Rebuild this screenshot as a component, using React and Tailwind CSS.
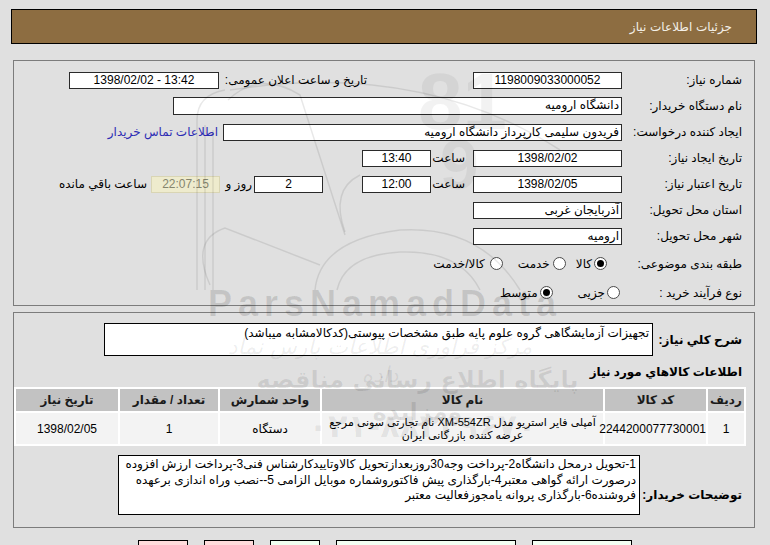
const font = "font-['Liberation_Sans','DejaVu_Sans',sans-serif]";

function Box({ className = "", children, ltr }) {
  return (
    <div
      dir={ltr ? "ltr" : undefined}
      className={`h-[17px] border border-[#2a2a2a] bg-white text-[12px] leading-[15px] whitespace-nowrap overflow-hidden ${className}`}
    >
      {children}
    </div>
  );
}

function Radio({ checked }) {
  return (
    <span className="w-[13px] h-[13px] rounded-full border border-[#4a4a4a] bg-white flex items-center justify-center shrink-0">
      {checked && <span className="w-[7px] h-[7px] rounded-full bg-black" />}
    </span>
  );
}

function Label({ w, children, className = "" }) {
  return <div className={`shrink-0 text-[12px] text-black whitespace-nowrap ${w} ${className}`}>{children}</div>;
}

function Watermark() {
  return (
    <div className="absolute inset-0 pointer-events-none overflow-hidden">
      <svg className="absolute left-0 top-0" width="770" height="545" fill="none" stroke="rgba(0,0,0,0.09)" strokeWidth="1.5">
        <path d="M197 290 V120 Q197 95 225 90" />
        <path d="M205 290 V125" />
        <path d="M213 290 V130" />
        <path d="M230 90 Q420 60 560 150" />
        <path d="M228 100 Q260 70 300 95 L345 235" />
        <path d="M210 285 Q190 240 225 228 L320 265" />
        <path d="M315 290 Q320 240 400 230 Q480 225 520 290" />
        <path d="M337 290 Q345 255 400 252 Q460 250 480 290" />
        <path d="M345 232 Q330 190 360 175" />
      </svg>
      <div className="absolute left-[418px] top-[62px] text-[80px] leading-[80px] font-bold text-black/[0.05] font-['Liberation_Sans',sans-serif]">
        81
      </div>
      <div className="absolute left-[440px] top-[130px] text-[70px] leading-[70px] font-bold text-black/[0.05] font-['Liberation_Sans',sans-serif]">
        9
      </div>
      <div className="absolute left-[208px] top-[284px] text-[36px] leading-[40px] font-bold tracking-[6px] text-black/[0.12] font-['Liberation_Sans',sans-serif]">
        ParsNamadData
      </div>
      <div dir="rtl" className="absolute left-[215px] top-[333px] w-[330px] text-center text-[22px] leading-[28px] italic text-black/[0.07] font-['DejaVu_Sans',sans-serif]">
        مرکز فراوری اطلاعات پارس نماد داده
      </div>
      <div dir="rtl" className="absolute left-[225px] top-[364px] w-[385px] text-center text-[24px] leading-[32px] font-bold text-black/[0.09] font-['DejaVu_Sans',sans-serif]">
        پایگاه اطلاع رسانی مناقصه ومزایده
      </div>
      <div dir="ltr" className="absolute left-[280px] top-[408px] w-[285px] text-center text-[32px] leading-[36px] font-bold text-black/[0.08] font-['DejaVu_Sans',sans-serif]">
        ۰۲۱-۸۸۳۴۹۶۷۰
      </div>
    </div>
  );
}

export default function App() {
  return (
    <div className={`relative w-[770px] h-[545px] overflow-hidden bg-[#e0e0e0] ${font}`}>
      <div className="ml-[11px] mt-[9px] w-[746px] h-[35px] bg-[#8d6d41] border border-black flex items-center justify-end pr-[24px]">
        <span className="text-[12px] text-[#f4f0e8] font-['DejaVu_Sans',sans-serif]">جزئیات اطلاعات نیاز</span>
      </div>

      {/* panel 1 */}
      <div dir="rtl" className="ml-[13px] mt-[16px] w-[742px] h-[246px] border border-[#7c7c7c] pr-[12px] pt-[6px]">
        <div className="flex items-center h-[26px]">
          <Label w="w-[120px]">شماره نیاز:</Label>
          <Box ltr className="w-[149px] text-center">1198009033000052</Box>
          <Label w="w-[148px] mr-[106px]">تاریخ و ساعت اعلان عمومی:</Label>
          <Box ltr className="w-[150px] text-center">1398/02/02 - 13:42</Box>
        </div>
        <div className="flex items-center h-[26px]">
          <Label w="w-[120px]">نام دستگاه خریدار:</Label>
          <Box className="w-[449px] h-[18px] pr-[2px]">دانشگاه ارومیه</Box>
        </div>
        <div className="flex items-center h-[26px]">
          <Label w="w-[120px]">ایجاد کننده درخواست:</Label>
          <Box className="w-[399px] pr-[2px]">فریدون سلیمی کارپرداز دانشگاه ارومیه</Box>
          <span className="mr-[5px] text-[12px] text-[#2c2cb4] whitespace-nowrap">اطلاعات تماس خریدار</span>
        </div>
        <div className="flex items-center h-[26px]">
          <Label w="w-[120px]">تاریخ ایجاد نیاز:</Label>
          <Box ltr className="w-[149px] text-center">1398/02/02</Box>
          <Label w="w-[42px]" className="pr-[8px]">ساعت</Label>
          <Box ltr className="w-[69px] text-center">13:40</Box>
        </div>
        <div className="flex items-center h-[26px]">
          <Label w="w-[120px]">تاریخ اعتبار نیاز:</Label>
          <Box ltr className="w-[149px] text-center">1398/02/05</Box>
          <Label w="w-[42px]" className="pr-[8px]">ساعت</Label>
          <Box ltr className="w-[69px] text-center">12:00</Box>
          <Box ltr className="w-[69px] mr-[39px] text-center">2</Box>
          <Label w="w-[34px]" className="pr-[2px]">روز و</Label>
          <div dir="ltr" className="w-[69px] h-[17px] bg-[#eeebcd] border border-[#d9d5b4] text-center text-[12px] leading-[15px] text-[#85856e]">
            22:07:15
          </div>
          <Label w="" className="mr-[4px]">ساعت باقي مانده</Label>
        </div>
        <div className="flex items-center h-[26px]">
          <Label w="w-[120px]">استان محل تحویل:</Label>
          <Box className="w-[149px] pr-[2px]">آذربایجان غربی</Box>
        </div>
        <div className="flex items-center h-[26px]">
          <Label w="w-[120px]">شهر محل تحویل:</Label>
          <Box className="w-[149px] pr-[2px]">ارومیه</Box>
        </div>
        <div className="flex items-center h-[29px]">
          <Label w="w-[120px]">طبقه بندی موضوعی:</Label>
          <div className="flex items-center mr-[15px] text-[12px]">
            <Radio checked />
            <span className="mr-[2px]">كالا</span>
            <span className="mr-[10px]"><Radio /></span>
            <span className="mr-[3px]">خدمت</span>
            <span className="mr-[15px]"><Radio /></span>
            <span className="mr-[5px]">كالا/خدمت</span>
          </div>
        </div>
        <div className="flex items-center h-[29px]">
          <Label w="w-[120px]">نوع فرآیند خرید :</Label>
          <div className="flex items-center mr-[2px] text-[12px]">
            <Radio />
            <span className="mr-[2px]">جزیی</span>
            <span className="mr-[25px]"><Radio checked /></span>
            <span className="mr-[2px]">متوسط</span>
          </div>
        </div>
      </div>

      {/* panel 2 */}
      <div dir="rtl" className="ml-[13px] mt-[6px] w-[742px] h-[216px] border border-[#7c7c7c] pr-[12px] pt-[10px]">
        <div className="flex items-center">
          <div className="w-[89px] shrink-0 text-[12px] font-bold whitespace-nowrap">شرح كلي نياز:</div>
          <div className="w-[549px] h-[33px] border border-black bg-white text-[12px] leading-[16px] pr-[3px] pt-[1px] whitespace-nowrap overflow-hidden">
            تجهیزات آزمایشگاهی گروه علوم پایه طبق مشخصات پیوستی(کدکالامشابه میباشد)
          </div>
        </div>
        <div className="mt-[6px] h-[20px] flex items-center text-[12px] font-bold">اطلاعات كالاهاي مورد نياز</div>
        <div className="mt-[5px] -mr-[4px] w-[718px]">
          <table className="w-full table-fixed border-separate border-spacing-[2px] bg-white text-[12px] text-center">
            <colgroup>
              <col className="w-[36px]" />
              <col className="w-[101px]" />
              <col className="w-[281px]" />
              <col className="w-[100px]" />
              <col className="w-[98px]" />
              <col className="w-[102px]" />
            </colgroup>
            <thead>
              <tr className="h-[22px] bg-[#c2c2c2] text-[#1a1a1a]">
                <th className="font-bold">ردیف</th>
                <th className="font-bold">کد کالا</th>
                <th className="font-bold">نام کالا</th>
                <th className="font-bold">واحد شمارش</th>
                <th className="font-bold">تعداد / مقدار</th>
                <th className="font-bold">تاریخ نیاز</th>
              </tr>
            </thead>
            <tbody>
              <tr className="h-[31px] bg-[#f3f3f3]">
                <td>1</td>
                <td>2244200077730001</td>
                <td className="text-[11px] leading-[13px] whitespace-nowrap overflow-hidden">
                  آمپلی فایر استریو مدل XM-554ZR نام تجارتی سونی مرجع
                  <br />
                  عرضه کننده بازرگانی ایران
                </td>
                <td>دستگاه</td>
                <td>1</td>
                <td>1398/02/05</td>
              </tr>
            </tbody>
          </table>
        </div>
        <div className="flex items-start mt-[9px]">
          <div className="w-[102px] shrink-0 mt-[31px] text-[12px] font-bold whitespace-nowrap">توضیحات خریدار:</div>
          <div className="w-[522px] h-[60px] border border-black bg-white text-[12px] leading-[15.5px] pr-[3px] pt-[1px] whitespace-nowrap overflow-hidden">
            1-تحویل درمحل دانشگاه2-پرداخت وجه30روزبعدازتحویل کالاوتاییدکارشناس فنی3-پرداخت ارزش افزوده
            <br />
            درصورت ارائه گواهی معتبر4-بارگذاری پیش فاکتوروشماره موبایل الزامی 5--نصب وراه اندازی برعهده
            <br />
            فروشنده6-بارگذاری پروانه یامجوزفعالیت معتبر
          </div>
        </div>
      </div>

      {/* buttons row (cut off) */}
      <div className="flex mt-[12px] ml-[138px] gap-[16px]">
        <div className="w-[50px] h-[24px] border border-black bg-[#ffdcdc]" />
        <div className="w-[50px] h-[24px] border border-black bg-[#ffdcdc]" />
        <div className="w-[50px] h-[24px] border border-black bg-[#f0fff0]" />
        <div className="w-[180px] h-[24px] border border-black bg-[#f3fff3]" />
        <div className="w-[100px] h-[24px] border border-black bg-[#f3fff3]" />
      </div>

      <Watermark />
    </div>
  );
}
